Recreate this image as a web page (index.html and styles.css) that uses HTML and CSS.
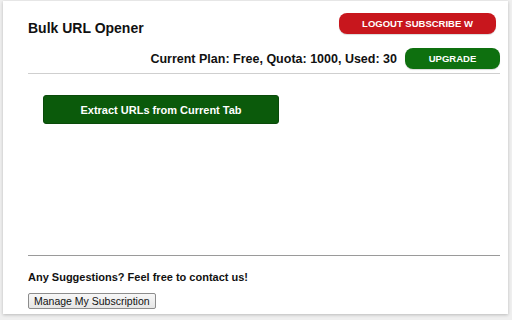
FILE: index.html
```html
<!DOCTYPE html>
<html>
<head>
<meta charset="utf-8">
<link rel="stylesheet" href="styles.css">
</head>
<body>
<div class="panel">
  <div class="row-top">
    <h1 class="title">Bulk URL Opener</h1>
    <button class="pill pill-red">LOGOUT SUBSCRIBE W</button>
  </div>
  <div class="row-plan">
    <span class="plan">Current Plan: Free, Quota: 1000, Used: 30</span>
    <button class="pill pill-green">UPGRADE</button>
  </div>
  <div class="rule rule-light"></div>
  <button class="extract">Extract URLs from Current Tab</button>
  <div class="rule rule-dark"></div>
  <p class="contact">Any Suggestions? Feel free to contact us!</p>
  <button class="manage">Manage My Subscription</button>
</div>
</body>
</html>
```

FILE: styles.css
```css
html, body {
  margin: 0;
  padding: 0;
  background: #efefef;
  width: 512px;
  height: 320px;
  overflow: hidden;
  font-family: "Liberation Sans", Arial, sans-serif;
}
.panel {
  margin: 1px 4px 0 3px;
  width: 505px;
  height: 313px;
  box-sizing: border-box;
  background: #ffffff;
  box-shadow: 0 1px 3px rgba(0, 0, 0, 0.22);
  padding: 12px 8px 5px 25px;
  display: flex;
  flex-direction: column;
}
.row-top {
  display: flex;
  justify-content: space-between;
  align-items: flex-start;
  height: 21px;
  padding-right: 4px;
}
.title {
  margin: 7px 0 0 0;
  font-size: 14px;
  line-height: 16px;
  font-weight: bold;
  color: #111;
}
.pill {
  border: none;
  color: #fff;
  font-family: "Liberation Sans", Arial, sans-serif;
  font-weight: bold;
  font-size: 9.5px;
  height: 21px;
  border-radius: 8px;
  padding: 0;
  box-shadow: 0 1px 1px rgba(0,0,0,0.15);
}
.pill-red {
  background: #c8161d;
  width: 157px;
}
.pill-green {
  background: #0e700f;
  width: 95px;
  margin-left: 8px;
}
.row-plan {
  display: flex;
  justify-content: flex-end;
  align-items: center;
  margin-top: 14px;
}
.plan {
  font-size: 12.5px;
  font-weight: bold;
  color: #111;
}
.rule {
  height: 1px;
}
.rule-light {
  background: #cfcfcf;
  margin-top: 4px;
}
.extract {
  margin: 21px 0 0 15px;
  width: 236px;
  height: 29px;
  background: #0b5a0b;
  color: #fff;
  border: 1px solid #0a4a0a;
  border-radius: 3px;
  font-family: "Liberation Sans", Arial, sans-serif;
  font-weight: bold;
  font-size: 11px;
  padding: 0;
  align-self: flex-start;
}
.rule-dark {
  background: #9a9a9a;
  margin-top: auto;
}
.contact {
  margin: 15px 0 0 0;
  font-size: 11px;
  line-height: 13px;
  font-weight: bold;
  color: #111;
}
.manage {
  margin-top: 9px;
  align-self: flex-start;
  height: 16px;
  padding: 0 5px;
  font-family: "Liberation Sans", Arial, sans-serif;
  font-size: 10.5px;
  color: #111;
  background: linear-gradient(#f7f7f7, #e6e6e6);
  border: 1px solid #8c8c8c;
  border-radius: 2px;
  line-height: 12px;
}
```
